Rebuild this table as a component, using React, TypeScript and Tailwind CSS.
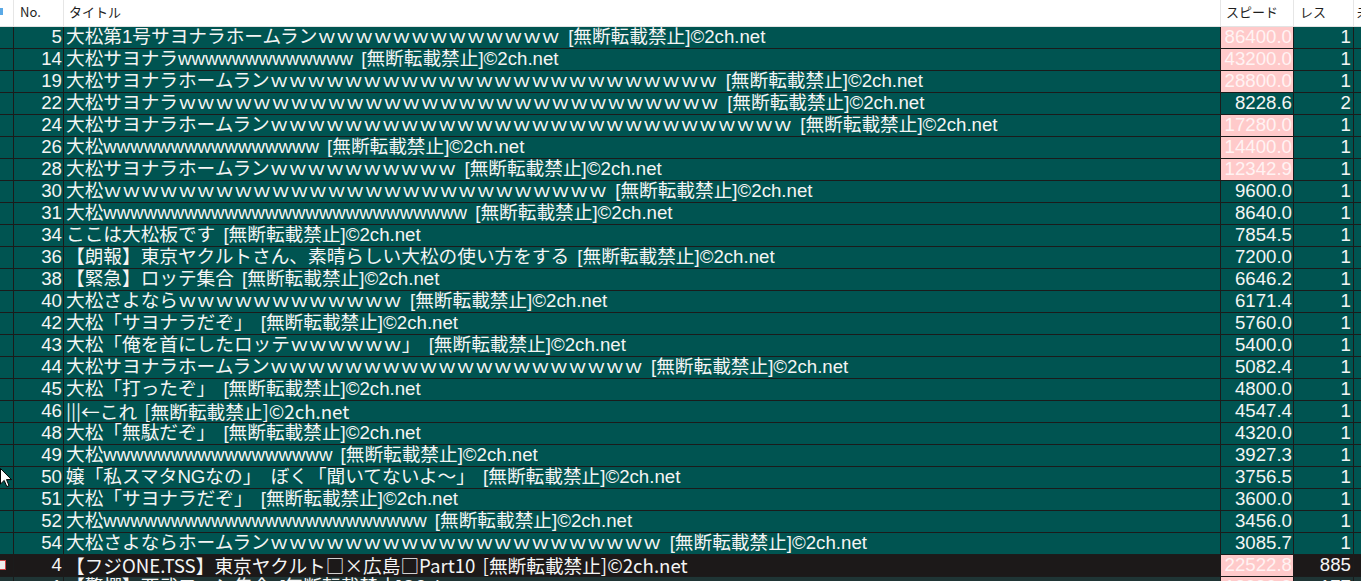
import React from "react";

type Thread = {
    no: number;
    title: string;
    speed: string;
    res: number;
    cjk?: boolean;
};

const FW = (n: number) => "ｗ".repeat(n);
const HW = (n: number) => "w".repeat(n);
const TAIL = " [無断転載禁止]©2ch.net";

const THREADS: Thread[] = [
    { no: 5, title: "大松第1号サヨナラホームラン" + FW(13) + TAIL, speed: "86400.0", res: 1 },
    { no: 14, title: "大松サヨナラ" + HW(13) + TAIL, speed: "43200.0", res: 1 },
    { no: 19, title: "大松サヨナラホームラン" + FW(24) + TAIL, speed: "28800.0", res: 1 },
    { no: 22, title: "大松サヨナラ" + FW(29) + TAIL, speed: "8228.6", res: 2 },
    { no: 24, title: "大松サヨナラホームラン" + FW(28) + TAIL, speed: "17280.0", res: 1 },
    { no: 26, title: "大松" + HW(16) + TAIL, speed: "14400.0", res: 1 },
    { no: 28, title: "大松サヨナラホームラン" + FW(10) + TAIL, speed: "12342.9", res: 1 },
    { no: 30, title: "大松" + FW(27) + TAIL, speed: "9600.0", res: 1 },
    { no: 31, title: "大松" + HW(27) + TAIL, speed: "8640.0", res: 1 },
    { no: 34, title: "ここは大松板です" + TAIL, speed: "7854.5", res: 1 },
    { no: 36, title: "【朗報】東京ヤクルトさん、素晴らしい大松の使い方をする" + TAIL, speed: "7200.0", res: 1 },
    { no: 38, title: "【緊急】ロッテ集合" + TAIL, speed: "6646.2", res: 1 },
    { no: 40, title: "大松さよなら" + FW(12) + TAIL, speed: "6171.4", res: 1 },
    { no: 42, title: "大松「サヨナラだぞ」" + TAIL, speed: "5760.0", res: 1 },
    { no: 43, title: "大松「俺を首にしたロッテ" + FW(6) + "」" + TAIL, speed: "5400.0", res: 1 },
    { no: 44, title: "大松サヨナラホームラン" + FW(20) + TAIL, speed: "5082.4", res: 1 },
    { no: 45, title: "大松「打ったぞ」" + TAIL, speed: "4800.0", res: 1 },
    { no: 46, title: "|||←これ" + TAIL, speed: "4547.4", res: 1, cjk: true },
    { no: 48, title: "大松「無駄だぞ」" + TAIL, speed: "4320.0", res: 1 },
    { no: 49, title: "大松" + HW(17) + TAIL, speed: "3927.3", res: 1 },
    { no: 50, title: "嬢「私スマタNGなの」　ぼく「聞いてないよ～」" + TAIL, speed: "3756.5", res: 1 },
    { no: 51, title: "大松「サヨナラだぞ」" + TAIL, speed: "3600.0", res: 1 },
    { no: 52, title: "大松" + HW(24) + TAIL, speed: "3456.0", res: 1 },
    { no: 54, title: "大松さよならホームラン" + FW(21) + TAIL, speed: "3085.7", res: 1 },
];

const GRID = "grid grid-cols-[14px_50px_1157px_73px_60px_1fr]";
const LINE = "border-r border-[#1b1b1b]";
const TITLE = "border-r border-[#1b1b1b] pl-[2px] whitespace-pre overflow-hidden [word-spacing:3px]";
const CJK = { fontFamily: '"Noto Sans CJK JP", sans-serif' };

function isFast(speed: string) {
    return parseFloat(speed) >= 10000;
}

function Row({ t }: { t: Thread }) {
    const fast = isFast(t.speed);
    return (
        <div className={`${GRID} h-[22px] border-b border-[#1b1b1b] bg-[#005451] text-[#f4f4f4] leading-[20px]`}>
            <div className={LINE} />
            <div className={`${LINE} pr-px text-right`}>{t.no}</div>
            <div className={TITLE} style={t.cjk ? CJK : undefined}>
                {t.title}
            </div>
            <div className={`${LINE} pr-px text-right ${fast ? "bg-[#ffcaca] text-[#fff3f3]" : ""}`}>
                {t.speed}
            </div>
            <div className={`${LINE} pr-[2px] text-right`}>{t.res}</div>
            <div />
        </div>
    );
}

function Cursor() {
    return (
        <svg className="absolute left-0 top-[468px]" width="13" height="20" viewBox="0 0 13 20">
            <path
                d="M0.5 0.5 L0.5 16 L4.2 12.4 L6.8 18.6 L9 17.6 L6.5 11.6 L11.5 11.6 Z"
                fill="#ffffff"
                stroke="#000000"
                strokeWidth="1"
            />
        </svg>
    );
}

export default function App() {
    return (
        <div
            className="relative w-[1361px] h-[581px] overflow-hidden bg-white text-[18.67px]"
            style={{ fontFamily: '"Liberation Sans", "Noto Sans CJK JP", sans-serif' }}
        >
            {/* header */}
            <div
                className={`${GRID} h-[27px] border-b border-[#e3e3e3] bg-white text-[13px] leading-[24px] text-[#1e1e1e]`}
                style={CJK}
            >
                <div className="border-r border-[#e6e6e6] overflow-hidden">
                    <div className="mt-[8px] h-[7px] w-[3px] bg-[#5aa9e6]" />
                </div>
                <div className="border-r border-[#e6e6e6] pl-[6px]">No.</div>
                <div className="border-r border-[#e6e6e6] pl-[5px]">タイトル</div>
                <div className="border-r border-[#e6e6e6] pl-[5px]">スピード</div>
                <div className="border-r border-[#e6e6e6] pl-[6px]">レス</div>
                <div className="overflow-hidden whitespace-nowrap pl-[3px]">未読</div>
            </div>

            {THREADS.map((t) => (
                <Row key={t.no} t={t} />
            ))}

            <div className={`${GRID} h-[22px] border-b border-[#1b1b1b] bg-[#1c1919] text-[#f4f4f4] leading-[20px]`}>
                <div className={`${LINE} overflow-hidden`}>
                    <div className="mt-[5px] ml-[-4px] h-[10px] w-[10px] border border-[#c44] bg-[#eee]" />
                </div>
                <div className={`${LINE} pr-px text-right`}>4</div>
                <div className={TITLE} style={CJK}>
                    {"【フジONE.TSS】東京ヤクルト□×広島□Part10" + TAIL}
                </div>
                <div className={`${LINE} pr-px text-right bg-[#ffcaca] text-[#fff3f3]`}>22522.8</div>
                <div className={`${LINE} pr-[2px] text-right`}>885</div>
                <div />
            </div>

            <div className={`${GRID} h-[22px] bg-[#1f3535] text-[#f4f4f4] leading-[20px]`}>
                <div className={LINE} />
                <div className={`${LINE} pr-px text-right`}>1</div>
                <div className={TITLE}>{"【驚愕】西武ファン集合" + TAIL}</div>
                <div className={`${LINE} pr-px text-right bg-[#ffcaca] text-[#fff3f3]`}>13090.9</div>
                <div className={`${LINE} pr-[2px] text-right`}>177</div>
                <div />
            </div>

            <Cursor />
        </div>
    );
}
